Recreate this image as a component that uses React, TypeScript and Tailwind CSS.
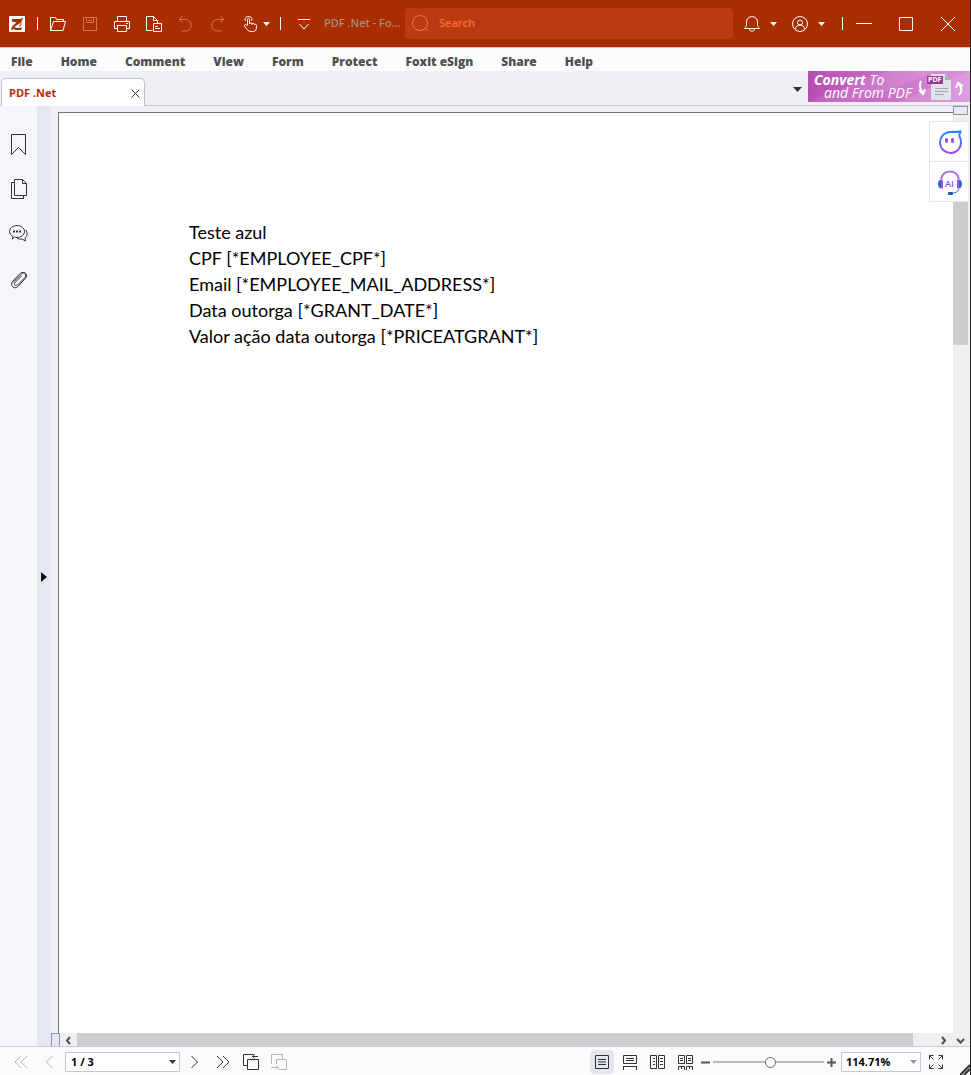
import { useState } from 'react'
import type { ReactNode } from 'react'

type IconProps = { children: ReactNode; size?: number; className?: string }

// Thin line icons, one pixel strokes
function Icon({ children, size = 16, className = '' }: IconProps) {
  return (
    <svg
      width={size}
      height={size}
      viewBox={`0 0 ${size} ${size}`}
      fill="none"
      stroke="currentColor"
      strokeWidth={1}
      className={`shrink-0 ${className}`}
      aria-hidden="true"
    >
      {children}
    </svg>
  )
}

function Caret({ className = '' }: { className?: string }) {
  return (
    <svg width="7" height="4" viewBox="0 0 7 4" fill="currentColor" className={`shrink-0 ${className}`} aria-hidden="true">
      <path d="M0 0h7L3.5 4z" />
    </svg>
  )
}

const MENU = ['File', 'Home', 'Comment', 'View', 'Form', 'Protect', 'Foxit eSign', 'Share', 'Help']

const QUICK_ACTIONS = [
  {
    label: 'Open',
    disabled: false,
    icon: <path d="M.5 14.5v-13h5l1 2h7v2M.5 14.5l3-9h12l-2.500 9z" />,
  },
  {
    label: 'Save',
    disabled: true,
    icon: <path d="M1.500 1.500h13v13h-13zM4.500 1.500v5h7v-5M6 4.500h4" />,
  },
  {
    label: 'Print',
    disabled: false,
    icon: <path d="M3.500 5.500v-5h9v5M3.500 12.500h-3v-7h15v7h-3M3.500 9.500h9v6h-9zM12 7.500h2" />,
  },
  {
    label: 'Export',
    disabled: false,
    icon: <path d="M6.500 14.500h-6v-14h7l4 4v3M7.500.5v4h4M7.500 7.500h8v8h-8zM9 10.500h3M9 12.500h5" />,
  },
  {
    label: 'Undo',
    disabled: true,
    icon: <path d="M4.500 0L1.500 3.500l3 3M1.500 3.500h6a5.500 5.500 0 0 1 0 11.500h-4" />,
  },
  {
    label: 'Redo',
    disabled: true,
    icon: <path d="M10.500 0l3 3.500-3 3M13.500 3.500h-6a5.500 5.500 0 0 0 0 11.500h4" />,
  },
]

const SIDE_PANELS = [
  { label: 'Bookmarks', icon: <path d="M2.500.5h14v20l-7-7-7 7z" /> },
  { label: 'Pages', icon: <path d="M5.500.5h8l4 4v12h-12zM13.500.5v4h4M5.500 3.500h-3v16h12v-3" /> },
  {
    label: 'Comments',
    icon: (
      <>
        <path d="M4 12.500c-2-1-3.500-3-3.500-5 0-3.500 3.500-6 7.500-6s7.500 2.500 7.500 6-3.500 6-7.500 6c-1 0-2-.2-2.500-.4L3.500 15zM16.500 6c2.500 2.500 2 6-.5 8l.5 3-3.500-2c-2 .5-4 0-5-1" />
        <path d="M4 7.500h2M7 7.500h2M10 7.500h2" strokeWidth={2} />
      </>
    ),
  },
  {
    label: 'Attachments',
    icon: (
      <path d="M4 13.500L13 4.500c2.500-2 6 .5 4 4L9 17.500c-3.500 3.500-8.500-1-5.500-5L10.500 5c3.500-3.500 8-.5 5.500 3.500L8.500 16c-2 1.500-4-.5-2.500-2.500L12.500 7" />
    ),
  },
]

const LINES = [
  'Teste azul',
  'CPF [*EMPLOYEE_CPF*]',
  'Email [*EMPLOYEE_MAIL_ADDRESS*]',
  'Data outorga [*GRANT_DATE*]',
  'Valor ação data outorga [*PRICEATGRANT*]',
]

const VIEW_MODES = [
  { label: 'Single page', icon: <path d="M1.500 1.500h13v13h-13zM4 5.500h8M4 8h8M4 10.500h8" /> },
  { label: 'Continuous', icon: <path d="M1.500 1.500h13v8h-13zM4 4.500h8M4 6.500h8M1 12.500h14M1.500 12.500V16M14.500 12.500V16" /> },
  { label: 'Facing', icon: <path d="M.5 1.500h6v13h-6zM8.500 1.500h6v13h-6zM3 4.500h2M3 7.500h2M3 10.500h2M10 4.500h3M10 7.500h3M10 10.500h3" /> },
  {
    label: 'Continuous facing',
    icon: <path d="M.5 1.500h6v8h-6zM8.500 1.500h6v8h-6zM2 4.500h3M2 6.500h3M10 4.500h3M10 6.500h3M.5 16v-3.500h6V16M8.500 16v-3.500h6V16M3.500 13v2M11.500 13v2" />,
  },
]

function TitleBar() {
  return (
    <header className="flex h-[47px] shrink-0 items-center bg-[#aa2d00] pr-px text-white">
      <svg width="16" height="16" viewBox="0 0 16 16" className="ml-[9px] shrink-0" aria-hidden="true">
        <rect width="16" height="16" rx="1" fill="#fff" />
        <path d="M3 3h6c2 0 3.500-.5 5-1-.5 2-1.500 4-3.500 5.500L5 11l3 1 5-.5-1 2.500H7L2 12.500 4 9.500l3.500-3L3 5.500z" fill="#aa2d00" />
        <path d="M2 14l3-2M12 6v3l-2 1" stroke="#aa2d00" fill="none" />
      </svg>
      <span className="mr-1 ml-3 h-[13px] w-px shrink-0 bg-white" />
      {QUICK_ACTIONS.map(a => (
        <button
          key={a.label}
          aria-label={a.label}
          disabled={a.disabled}
          className="flex h-8 w-8 shrink-0 items-center justify-center disabled:text-[#d3764f]"
        >
          <Icon>{a.icon}</Icon>
        </button>
      ))}
      <button aria-label="Hand tool" className="flex h-8 w-10 shrink-0 items-center gap-[5px] pl-2">
        <Icon>
          <path d="M5.500 9.500V3.500c0-1.500 2-1.500 2 0V8M7.500 8c0-1.500 2.500-1.500 2.500 0v.5C10 7 12.500 7 12.500 8.500V9c0-1 2-1 2 .5 0 4-.5 6-4 6H9c-2.500 0-4-2-6.500-5.500-.5-1.500 1.500-2 3-.5M3.500 5C2 2.500 4 .5 6.500.5S11 2.500 9.500 5" />
        </Icon>
        <Caret />
      </button>
      <span className="mr-[7px] ml-[6px] h-[13px] w-px shrink-0 bg-white" />
      <button aria-label="Customize toolbar" className="flex h-8 w-8 shrink-0 items-center justify-center">
        <Icon><path d="M2 3.500h12M3.500 8l4.500 5 4.500-5" /></Icon>
      </button>
      <span className="ml-1 w-[81px] shrink-0 text-[11px] font-semibold whitespace-nowrap text-[#ad8a7b]">PDF .Net - Fo...</span>
      <label className="flex h-[31px] min-w-0 flex-1 items-center rounded bg-[#bb3b11] pl-[7px] text-[#ff6c3c]">
        <Icon size={17}>
          <circle cx="8" cy="8" r="7.500" />
          <path d="M13.500 13.500l2.500 2.500" />
        </Icon>
        <input
          type="search"
          aria-label="Search"
          placeholder="Search"
          className="ml-[10px] min-w-0 flex-1 bg-transparent text-[11px] font-semibold outline-none placeholder:text-[#ff6c3c]"
        />
      </label>
      <button aria-label="Notifications" className="ml-[3px] flex h-8 w-12 shrink-0 items-center gap-[10px] pl-2">
        <Icon>
          <path d="M.5 12.500h15c-1.500-1.500-2-2.500-2-4.500V6c0-3-2-5-5.500-5.500C4.500 1 2.500 3 2.500 6v2c0 2-.5 3-2 4.500zM5.500 13c.5 3 4.500 3 5 0" />
        </Icon>
        <Caret />
      </button>
      <button aria-label="Account" className="flex h-8 w-12 shrink-0 items-center gap-[10px] pl-2">
        <Icon>
          <circle cx="8" cy="8" r="7.500" />
          <circle cx="8" cy="6.500" r="2.500" />
          <path d="M3.500 13c0-2.500 2-4 4.500-4s4.500 1.500 4.500 4" />
        </Icon>
        <Caret />
      </button>
      <span className="ml-[10px] h-[13px] w-px shrink-0 bg-white" />
      <button aria-label="Minimize" className="flex h-8 w-[42px] shrink-0 items-center justify-center">
        <Icon><path d="M0 7.500h16" /></Icon>
      </button>
      <button aria-label="Maximize" className="flex h-8 w-[42px] shrink-0 items-center justify-center">
        <Icon><path d="M1.500 1.500h13v13h-13z" /></Icon>
      </button>
      <button aria-label="Close" className="flex h-8 w-[42px] shrink-0 items-center justify-center">
        <Icon><path d="M1 1l14 14M15 1L1 15" /></Icon>
      </button>
    </header>
  )
}

function Banner() {
  return (
    <a
      href="#convert"
      className="relative block h-[31px] w-[162px] overflow-hidden bg-linear-to-r from-[#b84cb3] to-[#dc93dc] text-sm leading-[13px] text-white italic"
    >
      <svg width="162" height="31" className="absolute inset-0" aria-hidden="true">
        <path d="M0 31L80 0h50L50 31zM90 31l72-31v31z" fill="#fff" opacity=".1" />
        <path d="M123 3h14l6 6v19q0 1-1 1h-18q-1 0-1-1z" fill="#dfe3e8" />
        <path d="M137 3l6 6h-6z" fill="#a9b1b8" />
        <path d="M127 17.500h13M127 20.500h13M127 23.500h9" stroke="#a3a8b0" fill="none" />
        <rect x="119" y="5" width="16" height="8" fill="#9c3a9b" />
        <path d="M113 10c-2 4-1 8 2 12M111 19l4 4 2-5" stroke="#fff" strokeWidth="2" fill="none" />
        <path d="M151 24c3-3 3-7 0-11M148 17l2-5 5 3" stroke="#fff" strokeWidth="2" fill="none" />
      </svg>
      <span className="absolute top-[5px] left-[120px] text-[7px] leading-[7px] font-bold not-italic">PDF</span>
      <span className="relative block pt-[2px] pl-[6px]"><b>Convert</b> To</span>
      <span className="relative block pl-4">and From PDF</span>
    </a>
  )
}

function TabRow() {
  return (
    <div className="flex h-[35px] shrink-0 items-end border-b border-[#c8cad3] bg-[#eff0f4]">
      <div className="-mb-px ml-px flex h-7 w-36 items-center justify-between rounded-t-[5px] border border-b-0 border-[#bfc4d6] bg-white pt-[2px] pr-1 pl-[7px]">
        <span className="text-[11px] font-bold text-[#b52c08]">PDF .Net</span>
        <button aria-label="Close tab" className="text-[#333]">
          <Icon size={9}><path d="M.5 .5l8 8M8.500 .5l-8 8" /></Icon>
        </button>
      </div>
      <div className="ml-auto flex items-center self-start">
        <button aria-label="All tabs" className="mr-[5px] p-px pt-[6px] text-[#333]">
          <svg width="9" height="5" viewBox="0 0 9 5" fill="currentColor" aria-hidden="true"><path d="M0 0h9L4.500 5z" /></svg>
        </button>
        <Banner />
      </div>
    </div>
  )
}

function Assistant() {
  return (
    <div className="absolute top-[15px] right-[2px] w-[39px] divide-y divide-[#e4e5ec] border border-r-0 border-[#e4e5ec] bg-white">
      <button aria-label="Assistant" className="flex h-10 w-full items-center justify-center pl-px">
        <svg width="24" height="24" viewBox="0 0 24 24" fill="none" aria-hidden="true">
          <defs>
            <linearGradient id="chat" x1="0" y1="0" x2="0" y2="1">
              <stop stopColor="#2089ff" />
              <stop offset="1" stopColor="#a447f5" />
            </linearGradient>
          </defs>
          <path d="M22.500 1.500c-.5 2-1.500 3-1 5 .8 1.500 1.500 3.500 1.500 5.500A10.500 10.500 0 1 1 12 2c4 0 7 0 10.500-.5z" stroke="url(#chat)" strokeWidth="2" />
          <path d="M8.500 9.500v2M14.500 9.500v2" stroke="#a050f0" strokeWidth="3" strokeLinecap="round" />
        </svg>
      </button>
      <button aria-label="AI support" className="flex h-[39px] w-full items-center justify-center pt-[2px] pl-[2px]">
        <svg width="24" height="26" viewBox="0 0 24 26" fill="none" aria-hidden="true">
          <path d="M3 9C5-1 19-1 21 9" stroke="#b06cf0" strokeWidth="2" />
          <path d="M3 9.500C-1 10-1 18 3 18.500zM21 9.500c4 .5 4 8.500 0 9z" fill="#2e62c8" />
          <path d="M3 9.500h2v9H3zM19 9.500h2v9h-2z" fill="#a553ef" />
          <path d="M21 19c-1 3-4 4-8 4.500" stroke="#2870c8" />
          <rect x="10" y="22" width="5" height="3" rx="1" fill="#155fae" />
          <text x="7" y="17" fontSize="9" fontWeight="600" fill="#7a4fe8" fontFamily="Open Sans">AI</text>
        </svg>
      </button>
    </div>
  )
}

function Viewer() {
  return (
    <section className="relative flex min-w-0 flex-1 flex-col bg-[#eff0f5]">
      <div className="flex min-h-0 flex-1">
        <div className="mt-[6px] ml-[7px] min-w-0 flex-1 border-t border-l border-[#737479] bg-white pt-[106px] pl-[130px]">
          <article className="font-[Lato,sans-serif] text-lg leading-[26px] text-black">
            {LINES.map(line => <p key={line}>{line}</p>)}
          </article>
        </div>
        <div className="mr-[2px] flex w-[15px] flex-col bg-[#efefef]">
          <div className="h-[9px] border border-[#8d93ad] bg-[#e5e8f2]" />
          <div className="mt-[6px] h-[224px] bg-[#cdcdcd]" />
        </div>
      </div>
      <div className="flex h-[13px] shrink-0 items-stretch bg-[#efefef] text-[#505050]">
        <span className="w-[9px] border border-b-0 border-[#8d93ad] bg-[#e5e8f2]" />
        <button aria-label="Scroll left" className="flex w-[17px] items-center justify-center pt-px">
          <Icon size={9}><path d="M6 1L3 4.500 6 8" strokeWidth={2} /></Icon>
        </button>
        <span className="flex-1 bg-[#cdcdcd]" />
        <span className="w-[22px]" />
        <button aria-label="Scroll right" className="flex w-[17px] items-center justify-center pt-px">
          <Icon size={9}><path d="M3 1l3 3.500L3 8" strokeWidth={2} /></Icon>
        </button>
        <button aria-label="Scroll down" className="mr-[2px] flex w-4 items-center justify-center pt-px">
          <Icon size={9}><path d="M1 3l3.500 3.500L8 3" strokeWidth={2} /></Icon>
        </button>
      </div>
      <Assistant />
    </section>
  )
}

function StatusBar() {
  const [mode, setMode] = useState('Single page')
  const [zoom, setZoom] = useState(52)

  return (
    <footer className="flex h-[29px] shrink-0 items-center border-t border-[#c5c9dc] bg-[#fbfbfe] pt-[2px] text-[#333]">
      <button aria-label="First page" disabled className="ml-[13px] text-[#b5b5ba]">
        <Icon><path d="M8 2L2 8l6 6M14 2L8 8l6 6" /></Icon>
      </button>
      <button aria-label="Previous page" disabled className="ml-3 text-[#b5b5ba]">
        <Icon><path d="M11.500 2l-6 6 6 6" /></Icon>
      </button>
      <span className="relative ml-2">
        <select aria-label="Page" className="block h-5 w-[115px] appearance-none border border-[#c3c8da] bg-white pl-[5px] text-[11px] font-bold text-black">
          <option>1 / 3</option>
          <option>2 / 3</option>
          <option>3 / 3</option>
        </select>
        <Caret className="pointer-events-none absolute top-2 right-1" />
      </span>
      <button aria-label="Next page" className="ml-[7px]">
        <Icon><path d="M4.500 2l6 6-6 6" /></Icon>
      </button>
      <button aria-label="Last page" className="ml-3">
        <Icon><path d="M2 2l6 6-6 6M8 2l6 6-6 6" /></Icon>
      </button>
      <button aria-label="Previous view" className="ml-3">
        <Icon>
          <path d="M4 11.500H.5V.5h10M4.500 5.500h11v10h-11zM15 2.500H9.500M11.500.5l-2 2 2 2" />
        </Icon>
      </button>
      <button aria-label="Next view" disabled className="ml-3 text-[#b5b5ba]">
        <Icon>
          <path d="M.5 10V.5h11V5M5.500 10V5.500h10v10H7.500M0 13.500h7M5 11.500l2 2-2 2" />
        </Icon>
      </button>

      <div className="ml-auto flex gap-1">
        {VIEW_MODES.map(m => (
          <button
            key={m.label}
            aria-label={m.label}
            aria-pressed={mode === m.label}
            onClick={() => setMode(m.label)}
            className={`flex h-6 w-6 items-center justify-center rounded ${mode === m.label ? 'bg-[#e3e6ef]' : ''}`}
          >
            <Icon>{m.icon}</Icon>
          </button>
        ))}
      </div>
      <button aria-label="Zoom out" onClick={() => setZoom(z => z - 5)} className="ml-[3px] text-[#555]">
        <Icon size={9}><path d="M0 4.500h9" strokeWidth={2} /></Icon>
      </button>
      <input
        type="range"
        aria-label="Zoom"
        value={zoom}
        onChange={e => setZoom(Number(e.target.value))}
        className="mx-[3px] h-[2px] w-[111px] appearance-none bg-[#bbbbbe] [&::-webkit-slider-thumb]:h-[11px] [&::-webkit-slider-thumb]:w-[11px] [&::-webkit-slider-thumb]:appearance-none [&::-webkit-slider-thumb]:rounded-full [&::-webkit-slider-thumb]:border [&::-webkit-slider-thumb]:border-[#666] [&::-webkit-slider-thumb]:bg-white"
      />
      <button aria-label="Zoom in" onClick={() => setZoom(z => z + 5)} className="text-[#555]">
        <Icon size={9}><path d="M0 4.500h9M4.500 0v9" strokeWidth={2} /></Icon>
      </button>
      <span className="relative ml-[5px]">
        <select aria-label="Zoom level" className="block h-5 w-20 appearance-none border border-[#c3c8da] bg-white pl-1 text-[11px] font-bold text-black">
          <option>114.71%</option>
        </select>
        <Caret className="pointer-events-none absolute top-2 right-1 text-[#999]" />
      </span>
      <button aria-label="Full screen" className="ml-[7px]">
        <Icon>
          <path d="M1.500 5.500v-4h4M1.500 1.500l4 4M10.500 1.500h4v4M14.500 1.500l-4 4M1.500 10.500v4h4M1.500 14.500l4-4M14.500 10.500v4h-4M14.500 14.500l-4-4" />
        </Icon>
      </button>
      <svg width="10" height="11" viewBox="0 0 10 11" className="ml-4 shrink-0 self-end" aria-hidden="true">
        <path d="M0 11L10 1M4 11l6-6" stroke="#333" strokeWidth="2" />
        <path d="M2 11l8-8" stroke="#6fa0c8" />
      </svg>
    </footer>
  )
}

export default function App() {
  return (
    <div className="flex h-screen flex-col border-r border-[#222] bg-white font-['Open_Sans',sans-serif]">
      <TitleBar />
      <nav className="flex h-6 shrink-0 items-center gap-7 border-t border-[#c9cad6] bg-[#fcfcff] pt-1 pl-[11px] text-xs font-extrabold text-[#505050]">
        {MENU.map(item => <button key={item}>{item}</button>)}
      </nav>
      <TabRow />
      <main className="flex min-h-0 flex-1">
        <aside className="flex w-[37px] shrink-0 flex-col items-center gap-6 bg-[#f5f6fa] pt-7 pl-[2px] text-[#333]">
          {SIDE_PANELS.map(p => (
            <button key={p.label} aria-label={p.label}>
              <Icon size={21}>{p.icon}</Icon>
            </button>
          ))}
        </aside>
        <button aria-label="Expand panel" className="flex w-[14px] shrink-0 items-center justify-center bg-[#e5e8f2] pt-[2px]">
          <svg width="6" height="10" viewBox="0 0 6 10" aria-hidden="true"><path d="M0 0l6 5-6 5z" fill="#111" /></svg>
        </button>
        <Viewer />
      </main>
      <StatusBar />
    </div>
  )
}
